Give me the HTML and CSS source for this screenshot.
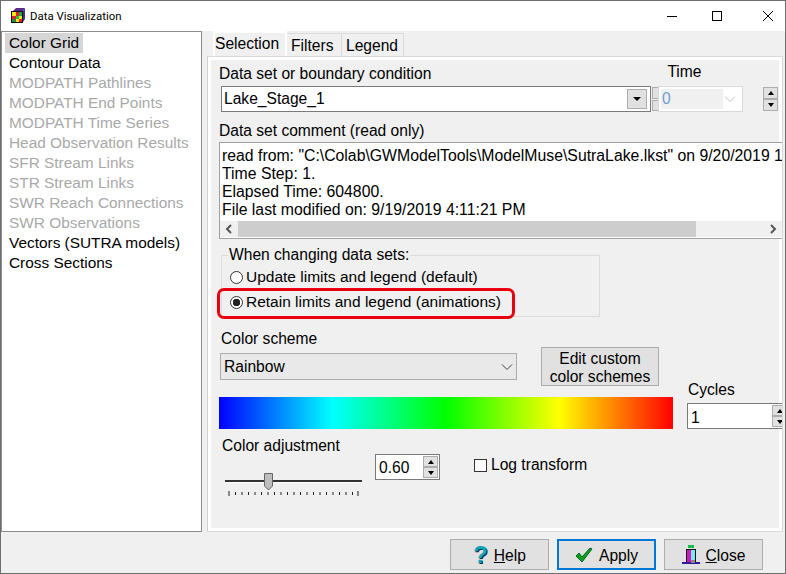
FILE: index.html
```html
<!DOCTYPE html>
<html lang="en">

<head>
    <meta charset="UTF-8">
    <meta name="viewport" content="width=device-width, initial-scale=1.0">
    <title>Data Visualization</title>
    <link rel="stylesheet" href="styles.css">
</head>

<body>
    <div class="window">
        <div class="titlebar">
            <svg class="app-icon" width="16" height="16" viewBox="0 0 16 16">
                <rect x="1" y="3" width="12" height="12" fill="#111"/>
                <rect x="2" y="4" width="4" height="4" fill="#f4e616"/>
                <rect x="6" y="4" width="3" height="4" fill="#e2202c"/>
                <rect x="9" y="4" width="3" height="4" fill="#22a83a"/>
                <rect x="2" y="8" width="4" height="3" fill="#e2202c"/>
                <rect x="6" y="8" width="3" height="3" fill="#22c23a"/>
                <rect x="9" y="8" width="3" height="3" fill="#f4e616"/>
                <rect x="2" y="11" width="4" height="3" fill="#2a8a3a"/>
                <rect x="6" y="11" width="3" height="3" fill="#f4e616"/>
                <rect x="9" y="11" width="3" height="3" fill="#e2202c"/>
                <polygon points="3,3 6,0 15,0 13,3" fill="#5a2a8c"/>
                <polygon points="13,3 15,0 15,11 13,14" fill="#3a3a8a"/>
            </svg>
            <span class="title">Data Visualization</span>
            <div class="caption-buttons">
                <svg width="12" height="12" viewBox="0 0 12 12"><path d="M1 6.5h10" stroke="#000" fill="none"/></svg>
                <svg width="12" height="12" viewBox="0 0 12 12"><rect x="1.5" y="1.5" width="9" height="9" stroke="#000" fill="none"/></svg>
                <svg width="12" height="12" viewBox="0 0 12 12"><path d="M1 1l10 10M11 1L1 11" stroke="#000" fill="none"/></svg>
            </div>
        </div>

        <div class="main">
            <ul class="tree">
                <li class="active">Color Grid</li>
                <li>Contour Data</li>
                <li class="off">MODPATH Pathlines</li>
                <li class="off">MODPATH End Points</li>
                <li class="off">MODPATH Time Series</li>
                <li class="off">Head Observation Results</li>
                <li class="off">SFR Stream Links</li>
                <li class="off">STR Stream Links</li>
                <li class="off">SWR Reach Connections</li>
                <li class="off">SWR Observations</li>
                <li>Vectors (SUTRA models)</li>
                <li>Cross Sections</li>
            </ul>

            <div class="tabs">
                <div class="tab-strip">
                    <div class="tab current">Selection</div>
                    <div class="tab filters">Filters</div>
                    <div class="tab legend">Legend</div>
                </div>

                <div class="sheet">
                    <div class="page">
                        <div class="head-row">
                            <label class="text">Data set or boundary condition</label>
                            <label class="text time-label">Time</label>
                        </div>

                        <div class="set-row">
                            <div class="set-combo">
                                <span>Lake_Stage_1</span>
                                <span class="drop-btn"><i class="arrow-down"></i></span>
                            </div>
                            <div class="mini-spin"><span></span><span></span></div>
                            <div class="time-combo">
                                <span class="time-value">0</span>
                                <svg width="12" height="8" viewBox="0 0 12 8"><path d="M1 1.5l5 5 5-5" stroke="#c4c4c4" fill="none"/></svg>
                            </div>
                            <div class="spin-btns time-spin">
                                <span><i class="arrow-up"></i></span>
                                <span><i class="arrow-down"></i></span>
                            </div>
                        </div>

                        <label class="text comment-label">Data set comment (read only)</label>
                        <div class="memo">
                            <div class="memo-text">
                                <div>read from: "C:\Colab\GWModelTools\ModelMuse\SutraLake.lkst" on 9/20/2019 1</div>
                                <div>Time Step: 1.</div>
                                <div>Elapsed Time: 604800.</div>
                                <div>File last modified on: 9/19/2019 4:11:21 PM</div>
                            </div>
                            <div class="hscroll">
                                <svg class="scroll-arrow" width="18" height="16" viewBox="0 0 18 16"><path d="M11 4l-4 4 4 4" stroke="#555" stroke-width="2" fill="none"/></svg>
                                <div class="thumb"></div>
                                <svg class="scroll-arrow" width="18" height="16" viewBox="0 0 18 16"><path d="M7 4l4 4-4 4" stroke="#555" stroke-width="2" fill="none"/></svg>
                            </div>
                        </div>

                        <fieldset class="group">
                            <legend>When changing data sets:</legend>
                            <label class="radio"><input type="radio" name="limits">Update limits and legend (default)</label>
                            <label class="radio"><input type="radio" name="limits" checked>Retain limits and legend (animations)</label>
                            <div class="callout"></div>
                        </fieldset>

                        <div class="scheme">
                            <div class="scheme-left">
                                <label class="text scheme-label">Color scheme</label>
                                <div class="scheme-row">
                                    <div class="scheme-combo">
                                        <span>Rainbow</span>
                                        <svg width="12" height="8" viewBox="0 0 12 8"><path d="M1 1.5l5 5 5-5" stroke="#444" fill="none"/></svg>
                                    </div>
                                    <button class="btn edit-btn" type="button">Edit custom<br>color schemes</button>
                                </div>
                                <div class="gradient"></div>
                            </div>
                            <div class="cycles">
                                <label class="text">Cycles</label>
                                <div class="spin-edit cycles-edit">
                                    <span class="spin-value">1</span>
                                    <div class="spin-btns">
                                        <span><i class="arrow-up"></i></span>
                                        <span><i class="arrow-down"></i></span>
                                    </div>
                                </div>
                            </div>
                        </div>

                        <div class="adjust">
                            <div class="adjust-left">
                                <label class="text adjust-label">Color adjustment</label>
                                <svg class="slider" width="140" height="26" viewBox="0 0 140 26">
                                    <rect x="0" y="7" width="137" height="2" fill="#333"/>
                                    <rect x="0" y="9" width="137" height="1" fill="#fff"/>
                                    <polygon points="39.5,0.5 47.5,0.5 47.5,13 43.5,17 39.5,13" fill="#bdbdbd" stroke="#666"/>
                                    <path d="M4 18v5M133 18v5" stroke="#222"/>
                                    <path d="M10.5 19v3M17 19v3M23.5 19v3M30 19v3M36.5 19v3M43 19v3M49.5 19v3M56 19v3M62.5 19v3M69 19v3M75.5 19v3M82 19v3M88.5 19v3M95 19v3M101.5 19v3M108 19v3M114.5 19v3M121 19v3M127.5 19v3" stroke="#222"/>
                                </svg>
                            </div>
                            <div class="spin-edit adjust-edit">
                                <span class="spin-value">0.60</span>
                                <div class="spin-btns">
                                    <span><i class="arrow-up"></i></span>
                                    <span><i class="arrow-down"></i></span>
                                </div>
                            </div>
                            <label class="check"><input type="checkbox">Log transform</label>
                        </div>
                    </div>
                </div>
            </div>
        </div>

        <div class="footer">
            <button class="btn action" type="button">
                <span class="help-mark">?</span>
                <span class="action-text"><u>H</u>elp</span>
            </button>
            <button class="btn action default" type="button">
                <svg width="18" height="16" viewBox="0 0 18 16"><polygon points="1,9 4,6 7,10 15,1 17,2 7,15" fill="#12a012" stroke="#063" stroke-width="1"/></svg>
                <span class="action-text">Apply</span>
            </button>
            <button class="btn action" type="button">
                <svg width="18" height="20" viewBox="0 0 18 20">
                    <rect x="6" y="0" width="6" height="3" fill="#12c04a"/>
                    <rect x="4" y="4" width="10" height="13" fill="#111"/>
                    <rect x="5" y="5" width="4" height="12" fill="#d018c0"/>
                    <rect x="9" y="5" width="4" height="12" fill="#6ff0f0"/>
                    <rect x="0" y="17" width="18" height="2" fill="#2a1aa0"/>
                    <rect x="9" y="15" width="4" height="3" fill="#888"/>
                </svg>
                <span class="action-text"><u>C</u>lose</span>
            </button>
        </div>
    </div>
</body>

</html>
```

FILE: styles.css
```css
* {
    box-sizing: border-box;
}

body {
    margin: 0;
    font-family: "Liberation Sans", Arial, sans-serif;
    font-size: 15.6px;
    color: #000;
    background: #f0f0f0;
    overflow: hidden;
}

.window {
    width: 786px;
    height: 574px;
    border: 1px solid #6e6e6e;
    background: #f0f0f0;
    display: flex;
    flex-direction: column;
    overflow: hidden;
}

.titlebar {
    height: 30px;
    flex: none;
    background: #fff;
    display: flex;
    align-items: center;
    padding-left: 9px;
}

.app-icon {
    flex: none;
}

.title {
    margin-left: 4px;
    font-family: Roboto, sans-serif;
    font-size: 11.4px;
}

.caption-buttons {
    margin-left: auto;
    display: flex;
    gap: 33px;
    padding-right: 11px;
}

.caption-buttons svg:last-child {
    margin-left: 6px;
}

.main {
    height: 501px;
    flex: none;
    display: flex;
}

/* left list */
.tree {
    width: 201px;
    flex: none;
    margin: 0;
    padding: 1px 0 0 3px;
    list-style: none;
    background: #fff;
    border: 1px solid #8c8c8c;
    font-size: 15.4px;
    line-height: 20px;
}

.tree li {
    padding-left: 4px;
    height: 20px;
}

.tree .active {
    width: fit-content;
    padding-right: 4px;
    background: #d6d6d6;
}

.tree .off {
    color: #a9a9a9;
}

/* tabs */
.tabs {
    width: 576px;
    flex: none;
    margin-left: 5px;
    display: flex;
    flex-direction: column;
}

.tab-strip {
    height: 25px;
    flex: none;
    display: flex;
    align-items: flex-end;
    padding-left: 6px;
}

.tab {
    height: 23px;
    padding: 3px 0 0 4px;
    line-height: 18px;
    border: 1px solid #dadada;
    border-bottom: none;
    border-left: none;
}

.tab.filters {
    width: 55px;
}

.tab.legend {
    width: 62px;
}

.tab.current {
    width: 74px;
    height: 25px;
    padding: 2px 0 0 0;
    background: #f0f0f0;
    border: 2px solid #fff;
    border-bottom: none;
}

.sheet {
    flex: 1;
    border: 1px solid #d9d9d9;
    border-left-color: #d0d0d0;
    background: #fff;
    padding: 3px;
    overflow: hidden;
}

.page {
    height: 100%;
    background: #f0f0f0;
    padding: 5px 0 0 8px;
    width: 568px;
}

.text {
    display: block;
    line-height: 18px;
    white-space: nowrap;
}

.head-row {
    height: 21px;
    display: flex;
}

.time-label {
    margin-left: 236px;
    margin-top: -2px;
}

/* data set and time */
.set-row {
    height: 26px;
    display: flex;
}

.set-combo {
    width: 430px;
    height: 26px;
    margin-left: 2px;
    flex: none;
    background: #fff;
    border: 1px solid #7a7a7a;
    display: flex;
    align-items: center;
    justify-content: space-between;
    padding: 0 3px 0 2px;
}

.drop-btn {
    width: 20px;
    height: 20px;
    background: #e1e1e1;
    border: 1px solid #adadad;
    display: flex;
    align-items: center;
    justify-content: center;
}

.arrow-down,
.arrow-up {
    display: block;
    width: 0;
    height: 0;
    border-left: 4px solid transparent;
    border-right: 4px solid transparent;
}

.arrow-down {
    border-top: 4px solid #000;
}

.arrow-up {
    border-bottom: 4px solid #000;
}

.mini-spin {
    width: 6px;
    margin-left: 1px;
    flex: none;
    display: flex;
    flex-direction: column;
    gap: 1px;
    padding: 1px 0;
}

.mini-spin span {
    flex: 1;
    background: #e1e1e1;
    border: 1px solid #adadad;
    border-right: none;
}

.time-combo {
    width: 85px;
    height: 26px;
    flex: none;
    background: #fff;
    border: 1px solid #d9d9d9;
    display: flex;
    align-items: center;
    justify-content: space-between;
    padding: 2px 6px 2px 2px;
}

.time-value {
    width: 62px;
    height: 20px;
    background: #f0f0f0;
    color: #6f9fd0;
    line-height: 20px;
    padding-left: 1px;
}

.spin-btns {
    display: flex;
    flex-direction: column;
    width: 15px;
    flex: none;
}

.spin-btns span {
    flex: 1;
    background: #e1e1e1;
    border: 1px solid #adadad;
    display: flex;
    align-items: center;
    justify-content: center;
}

.spin-btns .arrow-up,
.spin-btns .arrow-down {
    border-left-width: 3px;
    border-right-width: 3px;
}

.time-spin {
    margin-left: 20px;
    height: 24px;
    margin-top: 1px;
}

/* comment memo */
.comment-label {
    height: 18px;
    line-height: 20px;
    margin-top: 9px;
}

.memo {
    width: 563px;
    height: 97px;
    margin-top: 3px;
    background: #fff;
    border: 1px solid #a0a0a0;
    border-right: none;
    display: flex;
    flex-direction: column;
}

.memo-text {
    height: 78px;
    padding: 4px 0 0 2px;
    font-size: 15.8px;
    line-height: 18px;
    white-space: nowrap;
    overflow: hidden;
}

.hscroll {
    height: 16px;
    flex: none;
    display: flex;
    background: #f0f0f0;
}

.scroll-arrow {
    flex: none;
}

.thumb {
    width: 458px;
    background: #cdcdcd;
    margin-right: auto;
}

/* radio group */
.group {
    position: relative;
    width: 379px;
    height: 71px;
    margin: 7px 0 0 2px;
    padding: 0;
    border: 1px solid #dcdcdc;
}

.group legend {
    margin-left: 6px;
    padding: 0 1px;
    line-height: 18px;
}

.radio {
    display: flex;
    align-items: center;
    height: 25px;
    padding: 1px 0 0 8px;
    font-size: 15.5px;
    white-space: nowrap;
}

.radio input {
    appearance: none;
    width: 13px;
    height: 13px;
    margin: 0 3px 0 0;
    background: #fff;
    border: 1px solid #333;
    border-radius: 50%;
}

.radio input:checked {
    background: radial-gradient(circle, #222 0 3.5px, #fff 4px);
}

.callout {
    position: absolute;
    left: -5px;
    top: 24px;
    width: 298px;
    height: 31px;
    border: 3px solid #e8000e;
    border-radius: 7px;
}

/* color scheme */
.scheme {
    display: flex;
    margin-top: 12px;
}

.scheme-left {
    width: 468px;
    flex: none;
}

.scheme-label {
    height: 18px;
    line-height: 20px;
    margin-left: 2px;
}

.scheme-row {
    display: flex;
    align-items: center;
}

.scheme-combo {
    width: 297px;
    height: 27px;
    margin-left: 1px;
    background: #e9e9e9;
    border: 1px solid #adadad;
    display: flex;
    align-items: center;
    justify-content: space-between;
    padding: 0 3px 0 3px;
}

.btn {
    font: inherit;
    color: #000;
    background: #e1e1e1;
    border: 1px solid #adadad;
    padding: 0;
}

.edit-btn {
    width: 118px;
    height: 39px;
    margin-left: 24px;
    padding-top: 2px;
    line-height: 18px;
}

.gradient {
    width: 454px;
    height: 32px;
    margin-top: 11px;
    background: linear-gradient(to right, #0000ff, #00ffff, #00ff00, #ffff00, #ff0000);
}

.cycles {
    align-self: flex-end;
    width: 110px;
    flex: none;
}

.cycles label {
    margin-left: 1px;
    margin-bottom: 4px;
}

.spin-edit {
    height: 26px;
    background: #fff;
    border: 1px solid #7a7a7a;
    display: flex;
    justify-content: space-between;
    padding: 1px;
}

.spin-value {
    padding-left: 2px;
    line-height: 25px;
}

.cycles-edit {
    width: 110px;
    padding-right: 9px;
}

/* color adjustment */
.adjust {
    display: flex;
    align-items: flex-start;
    margin-top: 6px;
}

.adjust-left {
    width: 156px;
    flex: none;
    padding-left: 3px;
}

.adjust-label {
    height: 18px;
    line-height: 22px;
}

.slider {
    display: block;
    margin: 20px 0 0 3px;
}

.adjust-edit {
    width: 65px;
    margin-top: 19px;
}

.adjust-edit .spin-value {
    line-height: 23px;
}

.check {
    display: flex;
    align-items: center;
    height: 18px;
    margin: 21px 0 0 34px;
    white-space: nowrap;
}

.check input {
    appearance: none;
    width: 13px;
    height: 13px;
    margin: 0 4px 0 0;
    background: #fff;
    border: 1px solid #333;
}

/* bottom buttons */
.footer {
    flex: 1;
    display: flex;
    justify-content: flex-end;
    align-items: flex-start;
    gap: 8px;
    padding: 7px 22px 0 0;
}

.action {
    width: 99px;
    height: 31px;
    display: flex;
    align-items: center;
    justify-content: center;
    gap: 6px;
}

.action-text {
    padding-top: 2px;
}

.action.default {
    border: 2px solid #0078d7;
}

.help-mark {
    font-weight: bold;
    font-size: 24px;
    line-height: 24px;
    color: #12a4b8;
    text-shadow: 1px 1px 0 #06304a;
}
```
